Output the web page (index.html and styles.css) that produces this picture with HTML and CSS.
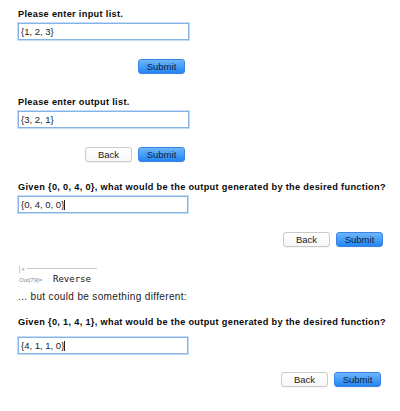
FILE: index.html
```html
<!DOCTYPE html>
<html>
<head>
<meta charset="utf-8">
<link rel="stylesheet" href="styles.css">
</head>
<body>
<div class="page">
  <section class="form narrow first">
    <div class="label">Please enter input list.</div>
    <div class="field">{1, 2, 3}</div>
    <div class="actions"><span class="btn primary">Submit</span></div>
  </section>
  <section class="form narrow">
    <div class="label">Please enter output list.</div>
    <div class="field">{3, 2, 1}</div>
    <div class="actions"><span class="btn">Back</span><span class="btn primary">Submit</span></div>
  </section>
  <section class="form wide">
    <div class="label">Given {0, 0, 4, 0}, what would be the output generated by the desired function?</div>
    <div class="field">{0, 4, 0, 0}<span class="caret"></span></div>
    <div class="actions"><span class="btn">Back</span><span class="btn primary">Submit</span></div>
  </section>
  <div class="out">
    <div class="out-bar"><span class="plus">+</span><span class="rule"></span></div>
    <div class="out-line"><span class="out-tag">Out[79]=</span><span class="out-val">Reverse</span></div>
  </div>
  <p class="note">... but could be something different:</p>
  <section class="form wide last">
    <div class="label">Given {0, 1, 4, 1}, what would be the output generated by the desired function?</div>
    <div class="field">{4, 1, 1, 0}<span class="caret"></span></div>
    <div class="actions"><span class="btn">Back</span><span class="btn primary">Submit</span></div>
  </section>
</div>
</body>
</html>
```
FILE: styles.css
```css
html, body {
  margin: 0;
  padding: 0;
  background: #ffffff;
}
body {
  font-family: "Liberation Sans", Arial, sans-serif;
  color: #1a1a1a;
  width: 400px;
  height: 411px;
  overflow: hidden;
}
.page {
  padding-top: 8px;
}
.form {
  padding-left: 18px;
  display: flex;
  flex-direction: column;
}
.form.narrow {
  width: 169px;
  margin-top: 22px;
}
.form.first {
  margin-top: 0;
}
.form.wide {
  width: 365px;
  margin-top: 19px;
}
.label {
  font-weight: bold;
  font-size: 9.2px;
  letter-spacing: 0.32px;
  line-height: 12px;
  height: 12px;
  color: #0a0a0a;
  white-space: nowrap;
}
.field {
  margin-top: 3px;
  width: 167px;
  height: 15px;
  border: 1px solid #86b3e6;
  box-shadow: 0 0 0 1px #c4dcf6;
  font-size: 9.5px;
  line-height: 15px;
  padding-left: 2px;
  box-sizing: content-box;
  color: #222;
  display: flex;
  align-items: center;
}
.form.wide .field {
  width: 166px;
}
.caret {
  display: inline-block;
  width: 1px;
  height: 10px;
  background: #222;
}
.actions {
  margin-top: 19px;
  display: flex;
  justify-content: flex-end;
  gap: 6px;
  padding-right: 2px;
}
.form.wide .actions {
  padding-right: 0;
}
.btn {
  width: 45px;
  height: 13px;
  border: 1px solid #c9c9c9;
  border-radius: 3px;
  background: linear-gradient(#ffffff, #f7f7f7);
  font-size: 9.5px;
  line-height: 13px;
  text-align: center;
  color: #1a1a1a;
  box-shadow: 0 0.5px 0.5px rgba(0,0,0,0.08);
}
.btn.primary {
  background: linear-gradient(#6db6fb, #2385f3);
  border-color: #3a84e6;
  color: #0e1f3d;
}
.out {
  margin-top: 19px;
  padding-left: 19px;
}
.out-bar {
  display: flex;
  align-items: flex-end;
  height: 7px;
}
.plus {
  font-size: 7px;
  line-height: 7px;
  color: #9a9a9a;
  width: 6px;
  border-left: 1px solid #c8c8c8;
  padding-left: 1px;
  height: 7px;
}
.rule {
  width: 70px;
  height: 0;
  border-top: 1px solid #c8c8c8;
  align-self: flex-start;
  margin-top: 2px;
}
.out-line {
  display: flex;
  align-items: baseline;
  height: 12px;
  line-height: 12px;
}
.out-tag {
  font-size: 6px;
  color: #8a8a8a;
  width: 34px;
}
.out-val {
  font-family: "DejaVu Sans Mono", "Liberation Mono", monospace;
  font-size: 9px;
  color: #111;
}
.note {
  margin: 6px 0 0 18px;
  font-size: 10px;
  letter-spacing: 0.35px;
  line-height: 12px;
  color: #222;
}
.form.last {
  margin-top: 13px;
}
.form.last .field {
  margin-top: 9px;
}
.form.last .actions {
  margin-top: 18px;
  padding-right: 2px;
}
```
